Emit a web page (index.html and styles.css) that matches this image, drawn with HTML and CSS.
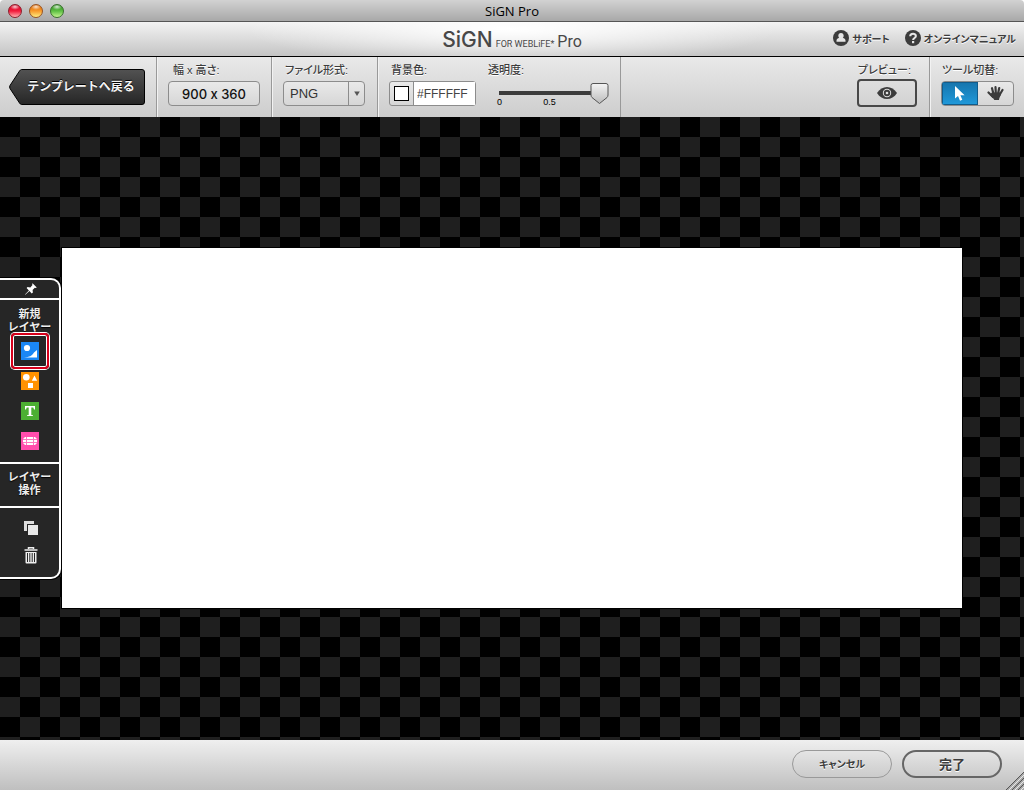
FILE: index.html
```
<!DOCTYPE html>
<html lang="ja">
<head>
<meta charset="utf-8">
<title>SiGN Pro</title>
<link rel="stylesheet" href="styles.css">
</head>
<body>
<div class="app">
  <header class="titlebar">
    <div class="lights">
      <button class="light red" aria-label="Close"></button>
      <button class="light amber" aria-label="Minimize"></button>
      <button class="light green" aria-label="Zoom"></button>
    </div>
    <h1 class="window-title">SiGN Pro</h1>
  </header>

  <div class="brandbar">
    <div class="logo"><span class="logo-sign">SiGN</span><span class="logo-for">FOR WEBLiFE*</span><span class="logo-pro">Pro</span></div>
    <nav class="help">
      <a class="help-link" href="#support">
        <svg width="16" height="16" viewBox="0 0 16 16"><circle cx="8" cy="8" r="8" fill="#3c3c3c"/><path d="M8 3c1.700 0 2.700 1.200 2.700 2.700 0 .9-.4 1.600-.9 2.100 1.500.4 2.600 1.200 2.700 2.700v1.300h-9v-1.300c.1-1.500 1.200-2.300 2.700-2.700-.5-.5-.9-1.200-.9-2.100C5.300 4.200 6.300 3 8 3z" fill="#e6e6e6"/></svg>
        <span>サポート</span>
      </a>
      <a class="help-link" href="#manual">
        <svg width="16" height="16" viewBox="0 0 16 16"><circle cx="8" cy="8" r="8" fill="#3c3c3c"/><path d="M5.200 6.300C5.200 2.900 10.900 3 10.900 6.100 10.900 8 8.100 8 8.100 10" fill="none" stroke="#e6e6e6" stroke-width="2"/><rect x="7" y="11" width="2.200" height="2.200" fill="#e6e6e6"/></svg>
        <span>オンラインマニュアル</span>
      </a>
    </nav>
  </div>

  <div class="toolbar">
    <div class="group group-back">
      <button class="back">
        <svg class="back-shape" viewBox="0 0 136 36" preserveAspectRatio="none"><defs><linearGradient id="bk" x1="0" y1="0" x2="0" y2="1"><stop offset="0" stop-color="#525252"/><stop offset="1" stop-color="#262626"/></linearGradient></defs><path d="M12.500.5H133q2.500 0 2.500 2.500v30q0 2.500-2.500 2.500H12.500Q11.500 35.500 10.500 34L1 19.500Q.2 18 1 16.500L10.500 2Q11.500.5 12.500.5z" fill="url(#bk)" stroke="#000"/></svg>
        <span class="back-text">テンプレートへ戻る</span>
      </button>
    </div>
    <div class="group group-size">
      <label class="label" for="size">幅 x 高さ:</label>
      <button class="control size" id="size">900 x 360</button>
    </div>
    <div class="group group-format">
      <label class="label" for="format">ファイル形式:</label>
      <div class="select-wrap">
        <select class="control format" id="format"><option>PNG</option></select>
        <span class="select-arrow"><svg width="6" height="5" viewBox="0 0 6 5"><path d="M.2.5h5.600L3 5z" fill="#555"/></svg></span>
      </div>
    </div>
    <div class="group group-color">
      <div class="field">
        <label class="label" for="color">背景色:</label>
        <div class="control color">
          <button class="swatch" aria-label="背景色"></button>
          <input class="hex" id="color" type="text" value="#FFFFFF">
        </div>
      </div>
      <div class="field opacity">
        <label class="label" for="opacity">透明度:</label>
        <input class="slider" id="opacity" type="range" min="0" max="1" step="0.01" value="1">
        <div class="ticks"><span>0</span><span>0.5</span><span></span></div>
      </div>
    </div>
    <div class="group group-preview">
      <label class="label" for="preview">プレビュー:</label>
      <button class="preview" id="preview" aria-label="プレビュー">
        <svg width="20" height="12" viewBox="0 0 20 12"><path d="M0 6C5-2 15-2 20 6 15 14 5 14 0 6z" fill="#3c3c3c"/><circle cx="10" cy="6" r="4.200" fill="#e0e0e0"/><circle cx="10" cy="6" r="3.200" fill="#3c3c3c"/><circle cx="10" cy="6" r="1.300" fill="#e0e0e0"/></svg>
      </button>
    </div>
    <div class="group group-tools">
      <span class="label" id="tools-label">ツール切替:</span>
      <div class="control tools" role="group" aria-labelledby="tools-label">
        <button class="tool active" aria-label="選択"><svg width="10" height="15" viewBox="0 0 10 15"><path d="M0 0v12.500L3 10l2 4.700 2.300-1L5.400 9.200H9.600z" fill="#fff"/></svg></button>
        <button class="tool" aria-label="移動"><svg width="17" height="15" viewBox="0 0 17 15"><g stroke="#3c3c3c" stroke-width="2.200" stroke-linecap="round"><path d="M6.500 8 5 2.200M8.800 7 8.500 1.200M11 8l1.200-6M12.500 9l3-5M6 11 1.500 6.500"/></g><path d="M4.800 6.500h8l1.200 2c-.6 2-1.700 3-2 5.500H7.300C6.800 12.500 4 11 3 8.800z" fill="#3c3c3c"/></svg></button>
      </div>
    </div>
  </div>

  <main class="workspace">
    <div class="canvas"></div>
    <aside class="panel">
      <button class="pin" aria-label="固定"><svg width="12" height="12" viewBox="0 0 12 12"><path d="M7.500.2 11.800 4.500l-1.200.5-.8-.3-2.200 2.200.3 2.600-1.200 1L4.500 8 .3 11.800 0 11.500 3.900 7.400 1.600 5.100l1-1.100 2.700.4 2.200-2.300-.4-.8z" fill="#fff"/></svg></button>
      <section class="section layers">
        <h2 class="panel-title">新規<br>レイヤー</h2>
        <button class="layer selected" aria-label="画像"><svg width="18" height="18" viewBox="0 0 18 18"><path fill="#1b87f5" d="M0 0h18v18H0z"/><circle cx="6" cy="6" r="3.100" fill="#fff"/><path d="M3 15.500c6-.5 7.500-1.500 10-5l3-2.500v7.500z" fill="#fff"/></svg></button>
        <button class="layer" aria-label="図形"><svg width="18" height="18" viewBox="0 0 18 18"><path fill="#ff9200" d="M0 0h18v18H0z"/><circle cx="5.300" cy="5.300" r="3.300" fill="#fff"/><path d="m13.500 3.500 2.700 5.300h-5.400zM7 11h5v5H7z" fill="#fff"/></svg></button>
        <button class="layer" aria-label="テキスト"><svg width="18" height="18" viewBox="0 0 18 18"><path fill="#4caf32" d="M0 0h18v18H0z"/><path d="M4 4h10v3.500h-1L12.300 5.500H10.300V13l1.700.3V14H6v-.7l1.700-.3V5.500H5.700L5 7.500H4z" fill="#fff"/></svg></button>
        <button class="layer" aria-label="ボタン"><svg width="18" height="18" viewBox="0 0 18 18"><path fill="#ff4dac" d="M0 0h18v18H0z"/><path d="M4 5h10l2 2v4l-2 2H4l-2-2V7z" fill="#fff"/><path d="M2 7.500h14M2 10.500h14M5.500 5v8M12.500 5v8" stroke="#ff75bf"/></svg></button>
      </section>
      <section class="section operations"><h2 class="panel-title">レイヤー<br>操作</h2></section>
      <section class="section actions">
        <button class="action" aria-label="複製"><svg width="14" height="14" viewBox="0 0 14 14"><path d="M0 0h10v3H3v7H0z" fill="#ddd"/><path d="M4 4h10v10H4z" fill="#e8e8e8"/></svg></button>
        <button class="action" aria-label="削除"><svg width="14" height="17" viewBox="0 0 14 17"><path d="M4.500 2V.7h5V2M.5 3h13" fill="none" stroke="#eee" stroke-width="1.500"/><path d="M1.500 5h11v10.500q0 1-1 1h-9q-1 0-1-1z" fill="#eee"/><path d="M3.500 6v9M5.800 6v9M8.200 6v9M10.500 6v9" stroke="#262626"/></svg></button>
      </section>
    </aside>
  </main>

  <footer class="footer">
    <button class="pill cancel">キャンセル</button>
    <button class="pill done">完了</button>
    <svg class="grip" width="18" height="18" viewBox="0 0 18 18"><path d="M0 18 18 0v18z" fill="#aaa"/><path d="M0 18 18 0M6 18 18 6M12 18l6-6" stroke="#555"/><path d="M3 18 18 3M9 18l9-9M15 18l3-3" stroke="#e8e8e8"/></svg>
  </footer>
</div>
</body>
</html>
```
FILE: styles.css
```
* { box-sizing: border-box; }

body {
  margin: 0;
  font-family: "Liberation Sans", "Noto Sans CJK JP", sans-serif;
  font-size: 11px;
  color: #3c3c3c;
}

button, input, select { font: inherit; color: inherit; margin: 0; padding: 0; }
button { border: 0; background: none; }
svg { display: block; }

.app { display: flex; flex-direction: column; min-height: 100vh; }

.titlebar {
  display: grid;
  grid-template-columns: 1fr auto 1fr;
  align-items: center;
  height: 22px;
  padding: 0 8px;
  background: linear-gradient(#d2d2d2, #a8a8a8);
  border-bottom: 1px solid #555;
  border-radius: 4px 4px 0 0;
}
.lights { display: flex; gap: 7px; }
.light { width: 14px; height: 14px; border-radius: 50%; border: 1px solid #666; }
.red { background: radial-gradient(ellipse 5px 3px at 50% 15%, #fffc, transparent), linear-gradient(#d1001f, #f21c3c 50%, #ffb0b0); border-color: #8c1f2c; }
.amber { background: radial-gradient(ellipse 5px 3px at 50% 15%, #fffc, transparent), linear-gradient(#d96500, #f99b2c 50%, #ffee80); border-color: #985322; }
.green { background: radial-gradient(ellipse 5px 3px at 50% 15%, #fffc, transparent), linear-gradient(#2f8c20, #5dbf43 50%, #c4f590); border-color: #38702c; }
.window-title { margin: 0; font: 13px/20px "Open Sans", sans-serif; color: #000; }

.brandbar {
  display: grid;
  grid-template-columns: 1fr auto 1fr;
  align-items: center;
  height: 35px;
  padding: 0 8px;
  background: radial-gradient(ellipse 26% 110% at 50% 20%, #fff, #fff0), linear-gradient(#f3f3f3, #c4c4c4);
  border-bottom: 1px solid #000;
}
.logo { grid-column: 2; display: flex; align-items: baseline; gap: 3px; padding-top: 1px; color: #484848; font-family: Roboto, sans-serif; }
.logo-sign { font: 500 21px/24px Inter, sans-serif; }
.logo-for { font-size: 9px; }
.logo-pro { font-size: 16px; }
.help { display: flex; justify-content: flex-end; gap: 15px; padding-bottom: 2px; }
.help-link {
  display: flex;
  align-items: center;
  gap: 3px;
  color: #3c3c3c;
  font-size: 10px;
  font-weight: bold;
  font-feature-settings: "palt";
  text-decoration: none;
  white-space: nowrap;
  text-shadow: 0 1px 0 #fff;
}

.toolbar {
  display: flex;
  height: 60px;
  background: linear-gradient(#e9e9e9, #cdcdcd);
}
.group { padding: 6px 11px 0; border-right: 1px solid #999; box-shadow: inset 1px 0 0 #f2f2f2; }
.group-back { padding: 12px 11px 0 9px; box-shadow: none; }
.group-format { padding-right: 12px; }
.group-color { display: flex; gap: 12px; }
.group-preview { margin-left: auto; padding-right: 12px; box-shadow: none; }
.group-tools { border-right: 0; padding-right: 10px; }

.label { display: block; height: 18px; padding-left: 2px; line-height: 14px; font-weight: 500; font-feature-settings: "palt"; white-space: nowrap; text-shadow: 0 1px 0 #fff; }
.group-size .label { padding-left: 5px; }
.group-preview .label, .group-tools .label { padding-left: 1px; }

.back { position: relative; display: block; width: 136px; height: 36px; }
.back-shape { position: absolute; inset: 0; width: 100%; height: 100%; }
.back-text { position: relative; display: block; padding-left: 8px; font-size: 12px; font-weight: bold; line-height: 36px; color: #f4f4f4; text-shadow: 0 -1px 0 #000; }

.control { height: 25px; border: 1px solid #8c8c8c; border-radius: 4px; background: linear-gradient(#e9e9e9, #d6d6d6); }
.size { width: 92px; font-family: Inter, sans-serif; font-size: 13px; font-weight: 500; font-variant-ligatures: none; font-feature-settings: "calt" 0; color: #111; }
.select-wrap { position: relative; width: 82px; }
.format { width: 100%; padding: 0 24px 0 6px; font-size: 13px; color: #333; appearance: none; }
.select-arrow { position: absolute; top: 1px; bottom: 1px; right: 0; width: 17px; display: grid; place-items: center; border-left: 1px solid #8c8c8c; pointer-events: none; }
.color { display: flex; align-items: center; border-radius: 3px; width: 87px; }
.swatch { flex: none; width: 15px; height: 15px; margin: 0 4px; border: 1px solid #000; background: #fff; }
.hex { flex: 1; min-width: 0; height: 100%; padding: 0 0 0 3px; border: 0; border-left: 1px solid #8c8c8c; background: #fff; font-size: 12px; color: #444; }

.opacity { width: 121px; }
.opacity .label { padding-left: 0; }
.slider { display: block; appearance: none; width: 110px; height: 24px; margin-left: 11px; background: linear-gradient(#3c3c3c, #3c3c3c) 0 10px / 100px 4px no-repeat; }
.slider::-webkit-slider-thumb {
  appearance: none;
  width: 19px;
  height: 24px;
  background: url("data:image/svg+xml,%3Csvg xmlns='http://www.w3.org/2000/svg' width='19' height='24'%3E%3Cdefs%3E%3ClinearGradient id='g' x1='0' y1='0' x2='0' y2='1'%3E%3Cstop stop-color='%23f4f4f4'/%3E%3Cstop offset='1' stop-color='%23bbb'/%3E%3C/linearGradient%3E%3C/defs%3E%3Cpath d='M3 2.500h13q2 0 2 2V14q0 1.500-1 2.500l-7.500 6-7.500-6q-1-1-1-2.500V4.500q0-2 2-2z' fill='url(%23g)' stroke='%23555'/%3E%3C/svg%3E") no-repeat;
}
.ticks { display: flex; justify-content: space-between; width: 100px; margin: -9px 0 0 9px; font-size: 9px; line-height: 12px; color: #000; }

.preview { display: grid; place-items: center; width: 60px; height: 28px; margin-top: -2px; border: 2px solid #484848; border-radius: 4px; }
.tools { display: flex; width: 73px; overflow: hidden; }
.tool { flex: 1; display: grid; place-items: center; }
.tool.active { background: linear-gradient(#1674ac, #209adb); box-shadow: inset 0 0 0 1px #125c8b; }

.workspace {
  position: relative;
  flex: 1;
  display: grid;
  place-items: center;
  padding-bottom: 1px;
  background: conic-gradient(#1f1f1f 25%, #000 0 50%, #1f1f1f 0 75%, #000 0) 0 0 / 40px 40px;
}
.canvas { width: 900px; height: 360px; background: #fff; box-shadow: 0 0 0 1px #000; }

.panel {
  position: absolute;
  left: 0;
  top: 0;
  bottom: 0;
  height: fit-content;
  margin: auto 0;
  width: 61px;
  border: 2px solid #fff;
  border-left: 0;
  border-radius: 0 10px 10px 0;
  background: #262626;
  box-shadow: 0 0 0 1px #000;
}
.pin { display: grid; place-items: center; width: 100%; height: 18px; padding-left: 3px; }
.section { display: flex; flex-direction: column; align-items: center; border-top: 2px solid #fff; }
.panel-title { margin: 0; font-size: 11px; line-height: 13px; font-weight: bold; text-align: center; color: #eee; text-shadow: 0 1px 1px #000; }
.layers { gap: 12px; padding: 8px 0 12px; }
.layers .panel-title { margin-bottom: -4px; }
.operations { padding: 7px 0 9px; }
.actions { gap: 12px; padding: 13px 0 13px 2px; }
.selected { position: relative; }
.selected::after {
  content: "";
  position: absolute;
  inset: -9px -10px;
  border: 2px solid #d7001b;
  border-radius: 4px;
  box-shadow: 0 0 0 1px #fff, inset 0 0 0 1px #fff;
}

.footer {
  position: relative;
  display: flex;
  justify-content: flex-end;
  gap: 10px;
  height: 50px;
  padding: 10px 22px 0;
  background: linear-gradient(#efefef, #bfbfbf);
}
.pill { width: 100px; height: 28px; padding-bottom: 2px; border-radius: 14px; font-weight: bold; color: #3c3c3c; text-shadow: 0 1px 0 #fff; font-feature-settings: "palt"; }
.cancel { border: 1px solid #999; font-size: 10px; }
.done { border: 2px solid #666; font-size: 13px; }
.grip { position: absolute; right: 0; bottom: 0; }
```
